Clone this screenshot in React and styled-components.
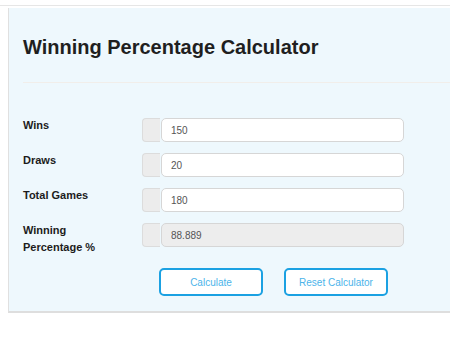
import React, { useState } from "react";
import styled, { createGlobalStyle } from "styled-components";

const Global = createGlobalStyle`
  html, body { margin: 0; padding: 0; background: #ffffff; }
  body { font-family: "Liberation Sans", Arial, sans-serif; overflow: hidden; }
`;

const Page = styled.div`
  padding-top: 5px;
  width: 450px;
`;

const TopRule = styled.div`
  height: 1px;
  background: #e6e6e6;
  margin-bottom: 2px;
`;

const Card = styled.section`
  margin-left: 8px;
  background: #eef8fd;
  border-left: 1px solid #e0e0e0;
  border-bottom: 2px solid #dedede;
  padding: 27px 0 15px 14px;
  box-sizing: border-box;
`;

const Title = styled.h1`
  margin: 0;
  font-size: 20px;
  line-height: 24px;
  font-weight: bold;
  color: #1f1f1f;
`;

const Divider = styled.hr`
  margin: 23px 0 35px 0;
  border: 0;
  border-top: 1px solid #f1eeea;
`;

const Form = styled.div`
  display: grid;
  grid-template-columns: 119px 18px 243px;
  row-gap: 11px;
  align-items: start;
`;

const Label = styled.label`
  font-size: 11px;
  line-height: 16.5px;
  font-weight: bold;
  color: #1c1c1c;
  margin-top: -1px;
`;

const Addon = styled.span`
  height: 24px;
  box-sizing: border-box;
  background: #ececec;
  border: 1px solid #dcdcdc;
  border-right: 0;
  border-radius: 4px 0 0 4px;
`;

const Input = styled.input`
  height: 24px;
  box-sizing: border-box;
  margin: 0 0 0 1px;
  border: 1px solid #d6d6d6;
  border-radius: 5px;
  background: ${(p) => (p.readOnly ? "#ededed" : "#ffffff")};
  font-family: "Liberation Sans", Arial, sans-serif;
  font-size: 10px;
  color: #555;
  padding: 0 9px;
  outline: none;
  width: 243px;
`;

const Buttons = styled.div`
  display: flex;
  gap: 21px;
  padding-left: 136px;
  margin-top: 13px;
`;

const Button = styled.button`
  width: 104px;
  height: 28px;
  box-sizing: border-box;
  background: #ffffff;
  border: 2px solid #1ba1e2;
  border-radius: 5px;
  font-family: "Liberation Sans", Arial, sans-serif;
  font-size: 10px;
  color: #4bb4ea;
  cursor: pointer;
  padding: 0;
`;

export default function App() {
  const [wins, setWins] = useState("150");
  const [draws, setDraws] = useState("20");
  const [total, setTotal] = useState("180");
  const [result, setResult] = useState("88.889");

  const calc = () => {
    const w = parseFloat(wins) || 0;
    const d = parseFloat(draws) || 0;
    const t = parseFloat(total) || 0;
    if (t > 0) setResult(String(Math.round(((w + d / 2) / t) * 100000) / 1000));
  };
  const reset = () => {
    setWins("");
    setDraws("");
    setTotal("");
    setResult("");
  };

  return (
    <Page>
      <Global />
      <TopRule />
      <Card>
        <Title>Winning Percentage Calculator</Title>
        <Divider />
        <Form>
          <Label>Wins</Label>
          <Addon />
          <Input value={wins} onChange={(e) => setWins(e.target.value)} />
          <Label>Draws</Label>
          <Addon />
          <Input value={draws} onChange={(e) => setDraws(e.target.value)} />
          <Label>Total Games</Label>
          <Addon />
          <Input value={total} onChange={(e) => setTotal(e.target.value)} />
          <Label>
            Winning
            <br />
            Percentage %
          </Label>
          <Addon />
          <Input value={result} readOnly />
        </Form>
        <Buttons>
          <Button onClick={calc}>Calculate</Button>
          <Button onClick={reset}>Reset Calculator</Button>
        </Buttons>
      </Card>
    </Page>
  );
}
